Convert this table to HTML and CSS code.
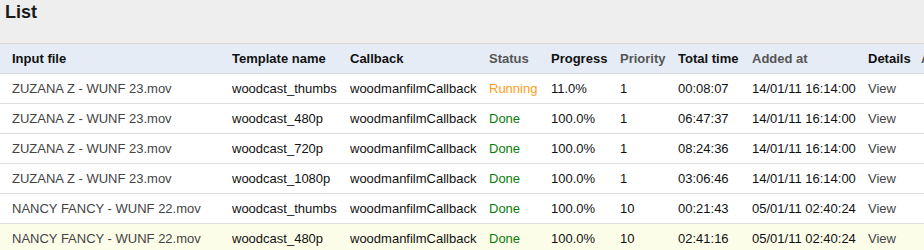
FILE: index.html
```html
<!DOCTYPE html>
<html>
<head>
<meta charset="utf-8">
<link rel="stylesheet" href="styles.css">
</head>
<body>
<div class="page">
  <div class="titlebar"><h1 class="title">List</h1></div>
  <table class="jobs">
    <colgroup>
      <col class="c-file"><col class="c-tpl"><col class="c-cb"><col class="c-status"><col class="c-prog"><col class="c-prio"><col class="c-time"><col class="c-added"><col class="c-det"><col class="c-act">
    </colgroup>
    <thead>
      <tr>
        <th>Input file</th>
        <th>Template name</th>
        <th>Callback</th>
        <th class="muted">Status</th>
        <th>Progress</th>
        <th class="muted">Priority</th>
        <th>Total time</th>
        <th class="muted">Added at</th>
        <th>Details</th>
        <th class="muted">Actions</th>
      </tr>
    </thead>
    <tbody>
      <tr>
        <td class="file">ZUZANA Z - WUNF 23.mov</td><td>woodcast_thumbs</td><td>woodmanfilmCallback</td><td class="running">Running</td><td>11.0%</td><td>1</td><td>00:08:07</td><td>14/01/11 16:14:00</td><td class="link">View</td><td></td>
      </tr>
      <tr>
        <td class="file">ZUZANA Z - WUNF 23.mov</td><td>woodcast_480p</td><td>woodmanfilmCallback</td><td class="done">Done</td><td>100.0%</td><td>1</td><td>06:47:37</td><td>14/01/11 16:14:00</td><td class="link">View</td><td></td>
      </tr>
      <tr>
        <td class="file">ZUZANA Z - WUNF 23.mov</td><td>woodcast_720p</td><td>woodmanfilmCallback</td><td class="done">Done</td><td>100.0%</td><td>1</td><td>08:24:36</td><td>14/01/11 16:14:00</td><td class="link">View</td><td></td>
      </tr>
      <tr>
        <td class="file">ZUZANA Z - WUNF 23.mov</td><td>woodcast_1080p</td><td>woodmanfilmCallback</td><td class="done">Done</td><td>100.0%</td><td>1</td><td>03:06:46</td><td>14/01/11 16:14:00</td><td class="link">View</td><td></td>
      </tr>
      <tr>
        <td class="file">NANCY FANCY - WUNF 22.mov</td><td>woodcast_thumbs</td><td>woodmanfilmCallback</td><td class="done">Done</td><td>100.0%</td><td>10</td><td>00:21:43</td><td>05/01/11 02:40:24</td><td class="link">View</td><td></td>
      </tr>
      <tr class="hover">
        <td class="file">NANCY FANCY - WUNF 22.mov</td><td>woodcast_480p</td><td>woodmanfilmCallback</td><td class="done">Done</td><td>100.0%</td><td>10</td><td>02:41:16</td><td>05/01/11 02:40:24</td><td class="link">View</td><td></td>
      </tr>
    </tbody>
  </table>
</div>
</body>
</html>
```
FILE: styles.css
```css
html, body {
  margin: 0;
  padding: 0;
  background: #ffffff;
  overflow: hidden;
}
.page {
  width: 924px;
  overflow: hidden;
  font-family: "Liberation Sans", Arial, Helvetica, sans-serif;
  font-size: 13px;
  color: #111;
}
.titlebar {
  background: #eeeeee;
  height: 44px;
  border-bottom: 1px solid #d8d8d8;
  box-sizing: border-box;
  padding: 0 5px;
}
.title {
  margin: 0;
  font-size: 18px;
  font-weight: bold;
  line-height: 24px;
  color: #1a1a1a;
}
.jobs {
  border-collapse: collapse;
  table-layout: fixed;
  width: 1000px;
}
.c-file { width: 232px; }
.c-tpl { width: 118px; }
.c-cb { width: 139px; }
.c-status { width: 62px; }
.c-prog { width: 69px; }
.c-prio { width: 58px; }
.c-time { width: 74px; }
.c-added { width: 116px; }
.c-det { width: 53px; }
.c-act { width: 79px; }
.jobs th, .jobs td {
  text-align: left;
  padding: 0;
  height: 29px;
  white-space: nowrap;
  overflow: hidden;
  border-bottom: 1px solid #dddddd;
}
.jobs th:first-child, .jobs td:first-child {
  padding-left: 12px;
}
.jobs thead tr {
  background: #e6ecf5;
}
.jobs th {
  font-weight: bold;
  color: #111;
}
.jobs th.muted {
  color: #555;
}
.jobs td.file {
  color: #444;
}
.jobs td.running {
  color: #ff9c1a;
}
.jobs td.done {
  color: #0a7d0a;
}
.jobs td.link {
  color: #444;
}
.jobs tr.hover {
  background: #fcfde9;
}
```
